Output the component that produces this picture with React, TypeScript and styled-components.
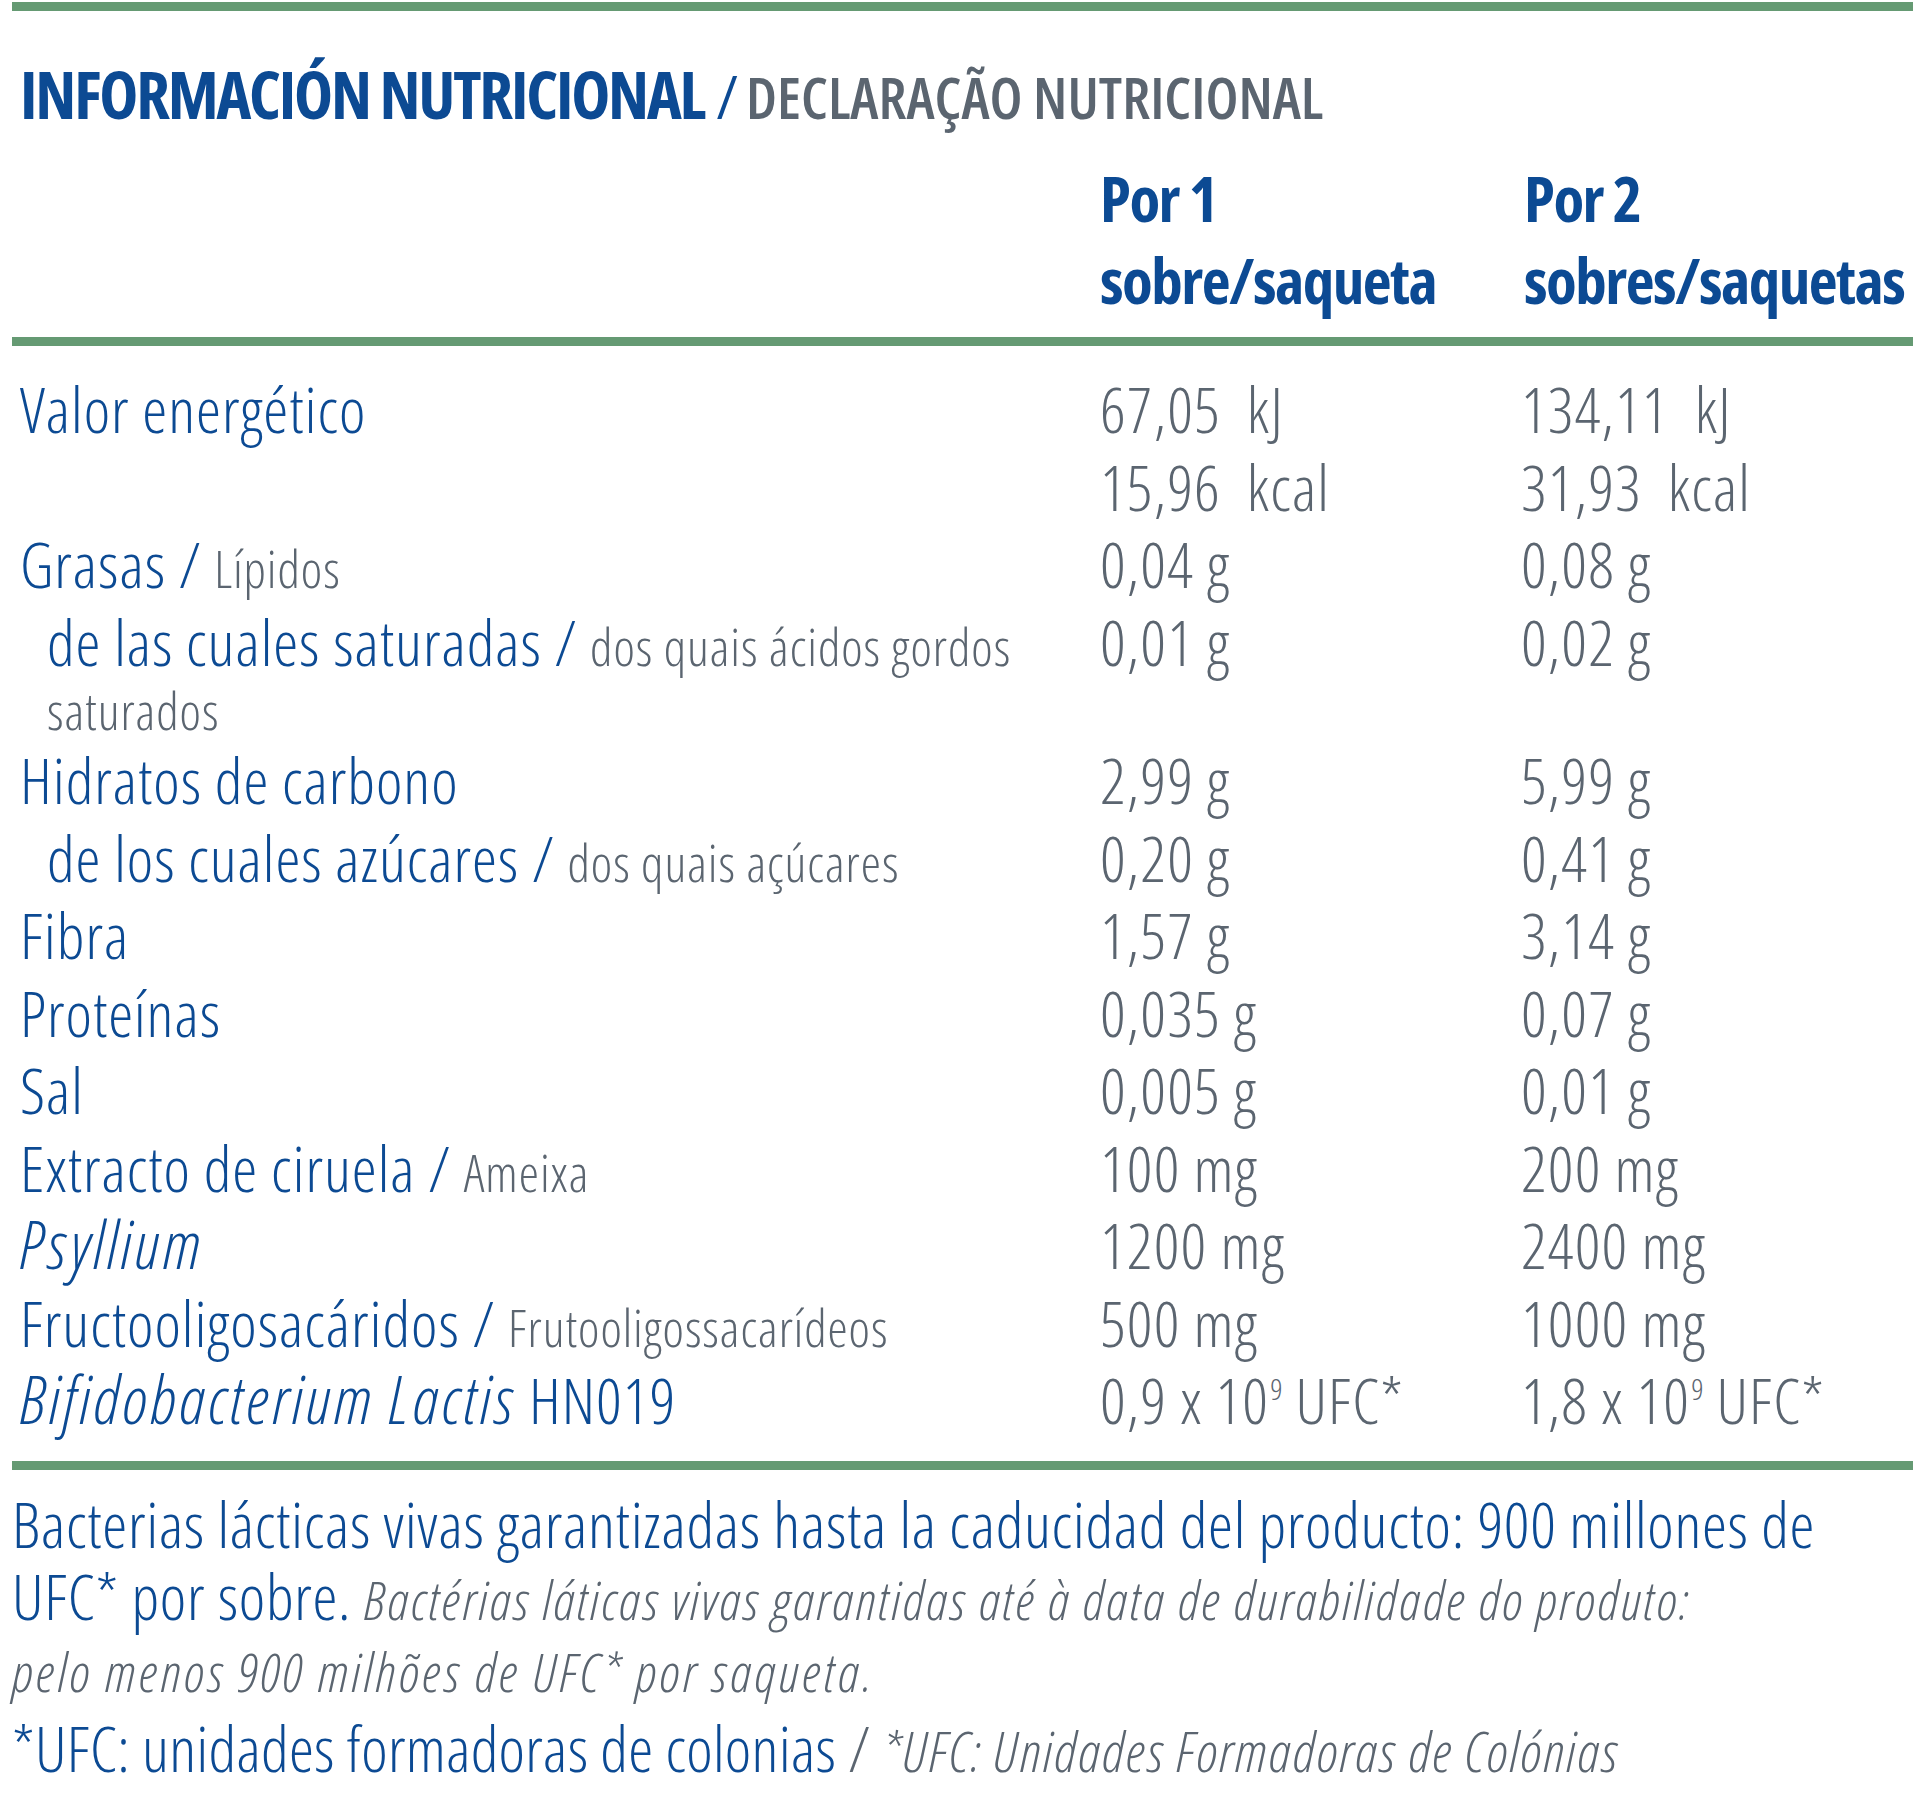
import React from "react";
import styled, { createGlobalStyle } from "styled-components";

const BLUE = "#0c4a93";
const GRAY = "#5b6570";
const GREEN = "#659a73";

const GlobalStyle = createGlobalStyle`
  html, body {
    margin: 0;
    padding: 0;
    background: #ffffff;
  }
  body {
    font-family: "Open Sans", "Noto Sans", sans-serif;
    font-stretch: 75%;
    -webkit-font-smoothing: antialiased;
  }
`;

const Page = styled.div`
  width: 1923px;
  padding: 2px 10px 0 12px;
  box-sizing: border-box;
  font-stretch: 75%;
`;

const Rule = styled.div<{ $top?: number }>`
  height: 9px;
  background: ${GREEN};
  margin-top: ${(p) => p.$top ?? 0}px;
`;

const Title = styled.h1`
  margin: 42px 0 0 8px;
  font-size: 66px;
  line-height: 80px;
  font-weight: 700;
  color: ${BLUE};
  letter-spacing: -2.2px;
  white-space: nowrap;
`;

const TitleSlash = styled.span`
  font-weight: 400;
  font-size: 60px;
  letter-spacing: 0;
  margin: 0 8px 0 12px;
`;

const TitleAlt = styled.span`
  font-size: 58px;
  font-weight: 600;
  letter-spacing: 0;
  color: ${GRAY};
`;

const HeaderGrid = styled.div`
  display: grid;
  grid-template-columns: 1076px 424px 1fr;
  margin-top: 20px;
  padding-left: 12px;
`;

const HeaderCell = styled.div<{ $col: number }>`
  grid-column: ${(p) => p.$col};
  font-size: 63px;
  line-height: 82px;
  font-weight: 700;
  letter-spacing: -1.5px;
  color: ${BLUE};
  white-space: nowrap;
`;

const Table = styled.div`
  display: grid;
  grid-template-columns: 1080px 421px 1fr;
  margin-top: 24px;
  padding-left: 8px;
`;

const Label = styled.div<{ $indent?: boolean }>`
  font-size: 63px;
  line-height: 77.5px;
  font-weight: 300;
  letter-spacing: 1px;
  color: ${BLUE};
  padding-left: ${(p) => (p.$indent ? 27 : 0)}px;
  white-space: nowrap;
`;

const Value = styled.div`
  font-size: 63px;
  line-height: 77.5px;
  font-weight: 300;
  letter-spacing: 1.2px;
  color: ${GRAY};
  white-space: pre;
`;

const Alt = styled.span`
  font-size: 51px;
  line-height: 1;
  letter-spacing: 1px;
  color: ${GRAY};
`;

const Continuation = styled.span`
  display: block;
  font-size: 51px;
  line-height: 61px;
  color: ${GRAY};
`;

const Em = styled.i`
  font-style: italic;
  font-size: 66px;
  line-height: 1;
  letter-spacing: 3px;
`;

const Sup = styled.sup`
  font-size: 30px;
  line-height: 0;
  vertical-align: 0;
  position: relative;
  top: -24px;
  letter-spacing: 0;
  margin-left: 1px;
`;

const Footer = styled.div`
  margin-top: 18px;
  font-size: 63px;
  font-weight: 300;
  color: ${BLUE};
`;

const FooterPara = styled.p<{ $lh: number; $top?: number; $ls: number }>`
  margin: ${(p) => p.$top ?? 0}px 0 0 0;
  line-height: ${(p) => p.$lh}px;
  letter-spacing: ${(p) => p.$ls}px;
  white-space: nowrap;
`;

const FooterAlt = styled.span<{ $size?: number; $ls?: number }>`
  font-style: italic;
  line-height: 1;
  color: ${GRAY};
  font-size: ${(p) => p.$size ?? 54}px;
  letter-spacing: ${(p) => p.$ls ?? 2.2}px;
`;

const FooterSlash = styled.span`
  color: ${GRAY};
`;

type Row = {
  label: React.ReactNode;
  indent?: boolean;
  v1: React.ReactNode;
  v2: React.ReactNode;
};

const rows: Row[] = [
  {
    label: "Valor energético",
    v1: (
      <>
        {"67,05  kJ"}
        <br />
        {"15,96  kcal"}
      </>
    ),
    v2: (
      <>
        {"134,11  kJ"}
        <br />
        {"31,93  kcal"}
      </>
    ),
  },
  {
    label: (
      <>
        Grasas / <Alt>Lípidos</Alt>
      </>
    ),
    v1: "0,04 g",
    v2: "0,08 g",
  },
  {
    label: (
      <>
        de las cuales saturadas / <Alt>dos quais ácidos gordos</Alt>
        <Continuation>saturados</Continuation>
      </>
    ),
    indent: true,
    v1: "0,01 g",
    v2: "0,02 g",
  },
  { label: "Hidratos de carbono", v1: "2,99 g", v2: "5,99 g" },
  {
    label: (
      <>
        de los cuales azúcares / <Alt>dos quais açúcares</Alt>
      </>
    ),
    indent: true,
    v1: "0,20 g",
    v2: "0,41 g",
  },
  { label: "Fibra", v1: "1,57 g", v2: "3,14 g" },
  { label: "Proteínas", v1: "0,035 g", v2: "0,07 g" },
  { label: "Sal", v1: "0,005 g", v2: "0,01 g" },
  {
    label: (
      <>
        Extracto de ciruela / <Alt>Ameixa</Alt>
      </>
    ),
    v1: "100 mg",
    v2: "200 mg",
  },
  { label: <Em>Psyllium</Em>, v1: "1200 mg", v2: "2400 mg" },
  {
    label: (
      <>
        Fructooligosacáridos / <Alt>Frutooligossacarídeos</Alt>
      </>
    ),
    v1: "500 mg",
    v2: "1000 mg",
  },
  {
    label: (
      <>
        <Em>Bifidobacterium Lactis</Em> HN019
      </>
    ),
    v1: (
      <>
        0,9 x 10<Sup>9</Sup> UFC*
      </>
    ),
    v2: (
      <>
        1,8 x 10<Sup>9</Sup> UFC*
      </>
    ),
  },
];

export default function App() {
  return (
    <>
      <GlobalStyle />
      <Page>
        <Rule />
        <Title>
          INFORMACIÓN NUTRICIONAL
          <TitleSlash>/</TitleSlash>
          <TitleAlt>DECLARAÇÃO NUTRICIONAL</TitleAlt>
        </Title>

        <HeaderGrid>
          <HeaderCell $col={2}>
            Por 1
            <br />
            sobre/saqueta
          </HeaderCell>
          <HeaderCell $col={3}>
            Por 2
            <br />
            sobres/saquetas
          </HeaderCell>
        </HeaderGrid>

        <Rule $top={16} />

        <Table>
          {rows.map((r, i) => (
            <React.Fragment key={i}>
              <Label $indent={r.indent}>{r.label}</Label>
              <Value>{r.v1}</Value>
              <Value>{r.v2}</Value>
            </React.Fragment>
          ))}
        </Table>

        <Rule $top={22} />

        <Footer>
          <FooterPara $lh={72} $ls={0.75}>
            Bacterias lácticas vivas garantizadas hasta la caducidad del producto: 900 millones de
            <br />
            UFC* por sobre.{" "}
            <FooterAlt>
              Bactérias láticas vivas garantidas até à data de durabilidade do produto:
            </FooterAlt>
            <br />
            <FooterAlt $ls={3}>pelo menos 900 milhões de UFC* por saqueta.</FooterAlt>
          </FooterPara>
          <FooterPara $lh={72} $top={8} $ls={0.3}>
            *UFC: unidades formadoras de colonias <FooterSlash>/</FooterSlash>{" "}
            <FooterAlt $size={56} $ls={1.8}>
              *UFC: Unidades Formadoras de Colónias
            </FooterAlt>
          </FooterPara>
        </Footer>
      </Page>
    </>
  );
}
